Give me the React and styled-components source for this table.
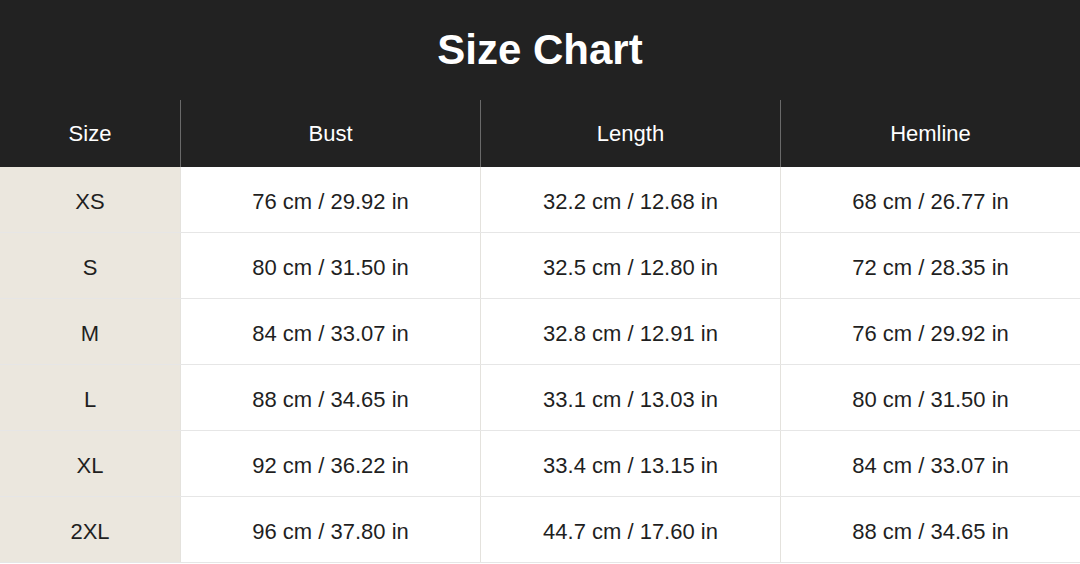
import styled, { createGlobalStyle } from "styled-components";

const GlobalStyle = createGlobalStyle`
    html, body {
        margin: 0;
        padding: 0;
        background: #ffffff;
        font-family: "Liberation Sans", Arial, sans-serif;
    }
`;

const Page = styled.div`
    width: 1080px;
    height: 564px;
    overflow: hidden;
    background: #ffffff;
`;

const Header = styled.div`
    background: #222222;
`;

const Title = styled.h1`
    margin: 0;
    height: 100px;
    display: flex;
    align-items: center;
    justify-content: center;
    color: #ffffff;
    font-size: 42px;
    font-weight: 700;
    padding-bottom: 1px;
    box-sizing: border-box;
`;

const Row = styled.div`
    display: grid;
    grid-template-columns: 180px 300px 300px 300px;
    height: ${(props) => (props.head ? "67px" : "66px")};
    border-bottom: ${(props) => (props.head ? "none" : "1px solid #e6e6e6")};
    box-sizing: border-box;
`;

const HeadCell = styled.div`
    display: flex;
    align-items: center;
    justify-content: center;
    color: #ffffff;
    font-size: 22px;
    border-left: ${(props) => (props.first ? "none" : "1px solid #6a6a6a")};
`;

const Cell = styled.div`
    display: flex;
    align-items: center;
    justify-content: center;
    color: #1f1f1f;
    font-size: 22px;
    background: ${(props) => (props.size ? "#ebe7de" : "#ffffff")};
    border-left: ${(props) => (props.size ? "none" : "1px solid #e4e2dd")};
    padding-top: 4px;
`;

const columns = ["Size", "Bust", "Length", "Hemline"];

const rows = [
    ["XS", "76 cm / 29.92 in", "32.2 cm / 12.68 in", "68 cm / 26.77 in"],
    ["S", "80 cm / 31.50 in", "32.5 cm / 12.80 in", "72 cm / 28.35 in"],
    ["M", "84 cm / 33.07 in", "32.8 cm / 12.91 in", "76 cm / 29.92 in"],
    ["L", "88 cm / 34.65 in", "33.1 cm / 13.03 in", "80 cm / 31.50 in"],
    ["XL", "92 cm / 36.22 in", "33.4 cm / 13.15 in", "84 cm / 33.07 in"],
    ["2XL", "96 cm / 37.80 in", "44.7 cm / 17.60 in", "88 cm / 34.65 in"],
];

const App = () => {
    return (
        <Page>
            <GlobalStyle />
            <Header>
                <Title>Size Chart</Title>
                <Row head>
                    {columns.map((col, idx) => (
                        <HeadCell key={col} first={idx === 0}>
                            {col}
                        </HeadCell>
                    ))}
                </Row>
            </Header>
            {rows.map((row) => (
                <Row key={row[0]}>
                    {row.map((val, idx) => (
                        <Cell key={idx} size={idx === 0}>
                            {val}
                        </Cell>
                    ))}
                </Row>
            ))}
        </Page>
    );
};

export default App;
